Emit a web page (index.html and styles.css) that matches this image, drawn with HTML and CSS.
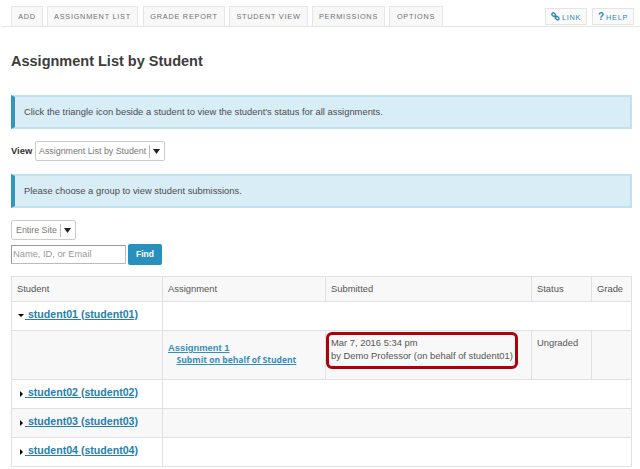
FILE: index.html
```html
<!DOCTYPE html>
<html lang="en">
<head>
<meta charset="utf-8">
<title>Assignment List by Student</title>
<link rel="stylesheet" href="styles.css">
</head>
<body>
<nav class="toolbar">
  <div class="tabs">
    <a class="tab add">ADD</a>
    <a class="tab list">ASSIGNMENT LIST</a>
    <a class="tab report">GRADE REPORT</a>
    <a class="tab view">STUDENT VIEW</a>
    <a class="tab perms">PERMISSIONS</a>
    <a class="tab options">OPTIONS</a>
  </div>
  <div class="tools">
    <a class="tool link"><svg class="chain" viewBox="0 0 9 9"><g fill="none" stroke="currentColor" stroke-width="1.3"><rect x="-2" y="-1.4" width="4" height="2.8" rx="1.4" transform="translate(2.7 2.7) rotate(45)"/><rect x="-2" y="-1.4" width="4" height="2.8" rx="1.4" transform="translate(6.2 6.2) rotate(45)"/><path d="M3.5 3.5L5.5 5.5"/></g></svg><span>LINK</span></a>
    <a class="tool help"><b>?</b><span>HELP</span></a>
  </div>
</nav>
<main>
  <h1><span>Assignment List by Student</span></h1>
  <p class="info first"><span>Click the triangle icon beside a student to view the student's status for all assignments.</span></p>
  <div class="chooser">
    <b>View</b>
    <div class="select wide"><span>Assignment List by Student</span><i></i><svg viewBox="0 0 7 5"><path d="M0 0H7L3.5 5Z"/></svg></div>
  </div>
  <p class="info second"><span>Please choose a group to view student submissions.</span></p>
  <div class="select site"><span>Entire Site</span><i></i><svg viewBox="0 0 7 5"><path d="M0 0H7L3.5 5Z"/></svg></div>
  <div class="search">
    <div class="field">Name, ID, or Email</div>
    <div class="find">Find</div>
  </div>
  <div class="table">
    <div class="row head"><div>Student</div><div>Assignment</div><div>Submitted</div><div>Status</div><div>Grade</div></div>
    <div class="row student"><div><svg class="open" viewBox="0 0 6 3"><path d="M0 0H6L3 3Z"/></svg><a>&nbsp;student01 (student01)</a></div><div></div></div>
    <div class="row detail">
      <div></div>
      <div><a class="assignment">Assignment 1</a><a class="submit">Submit on behalf of Student</a></div>
      <div class="submitted">Mar 7, 2016 5:34 pm<br><span>by Demo Professor (on behalf of student01)</span><div class="highlight"></div></div>
      <div>Ungraded</div>
      <div></div>
    </div>
    <div class="row student"><div><svg class="closed" viewBox="0 0 3 6"><path d="M0 0V6L3 3Z"/></svg><a>&nbsp;student02 (student02)</a></div><div></div></div>
    <div class="row student shade"><div><svg class="closed" viewBox="0 0 3 6"><path d="M0 0V6L3 3Z"/></svg><a>&nbsp;student03 (student03)</a></div><div></div></div>
    <div class="row student"><div><svg class="closed" viewBox="0 0 3 6"><path d="M0 0V6L3 3Z"/></svg><a>&nbsp;student04 (student04)</a></div><div></div></div>
  </div>
</main>
</body>
</html>
```
FILE: styles.css
```css
* { box-sizing: border-box; }
body { margin: 0; background: #fff; color: #555; font: 9.38px/13px "Liberation Sans", Arial, sans-serif; width: 640px; height: 469px; overflow: hidden; }
.toolbar { display: flex; justify-content: space-between; height: 27px; margin-left: 2px; padding: 6px 6px 0 9px; border-bottom: 1px solid #e4e4e4; }
.tabs { display: flex; gap: 4px; }
.tab { height: 20px; border: 1px solid #e6e6e6; border-bottom: 0; background: #f8f8f8; color: #707070; font-size: 7.3px; line-height: 19px; letter-spacing: .76px; text-align: center; white-space: nowrap; }
.add { width: 32px; }
.list { width: 91px; }
.report { width: 82px; margin-left: 1px; }
.view { width: 79px; }
.perms { width: 73px; }
.options { width: 54px; }
.tools { display: flex; gap: 5px; padding-top: 2px; }
.tool { display: flex; align-items: center; justify-content: center; height: 17px; border: 1px solid #e4e4e4; background: #fafafa; color: #2d87b5; font-size: 7.4px; line-height: 15px; letter-spacing: .65px; gap: 2px; }
.tool span { padding-top: 1px; }
.link { width: 42px; }
.help { width: 42px; }
.help b { font-size: 10px; letter-spacing: 0; }
.chain { width: 9px; height: 9px; flex: none; }
main { padding-left: 11px; }
h1 { margin: 25px 0 0; font-size: 14.5px; line-height: 18px; color: #3c3c3c; }
.info { width: 621px; height: 34px; margin: 0; padding-left: 9px; border: 2px solid #bfe2f1; border-left: 4px solid #3297bf; background: #d9edf7; color: #4c4c4c; line-height: 31px; }
.first { margin-top: 25px; }
.chooser { display: flex; align-items: center; height: 20px; margin-top: 12px; color: #333; }
.chooser b { width: 24px; }
.select { display: flex; align-items: center; height: 20px; border: 1px solid #ccc; border-radius: 2px; background: #fff; color: #777; padding-left: 4px; font-size: 8.85px; white-space: nowrap; }
.select i { width: 1px; height: 13px; background: #bbb; margin-left: auto; }
.select svg { flex: none; width: 7px; height: 5px; margin: 0 4px 0 3px; fill: #222; }
.wide { width: 130px; padding-left: 3px; }
.second { margin-top: 13px; }
.site { width: 65px; margin-top: 12px; }
.search { display: flex; gap: 2px; margin-top: 4px; }
.field { width: 115px; height: 19px; margin-top: 1px; border: 1px solid #bbb; border-top-color: #999; border-left-color: #999; color: #999; font-size: 9.3px; line-height: 17px; padding-left: 1px; }
.find { width: 34px; height: 21px; border-radius: 2px; background: #2890bf; color: #fff; font-weight: bold; font-size: 8.5px; line-height: 21px; text-align: center; }
.table { width: 621px; margin-top: 11px; border: 1px solid #e1e1e1; border-bottom: 0; }
.row { display: grid; grid-template-columns: 150px 163px 206px 60px 40px; border-bottom: 1px solid #e1e1e1; }
.row > div { padding-left: 5px; border-left: 1px solid #e1e1e1; white-space: nowrap; }
.row > div:first-child { border-left: 0; }
.head { height: 25px; background: #f8f8f8; line-height: 24px; }
.student { height: 29px; grid-template-columns: 150px 469px; }
.student > div { display: flex; align-items: center; padding-bottom: 5px; }
.student a { font-size: 10.6px; line-height: 14px; }
.table a { font-weight: bold; color: #257fae; text-decoration: underline; }
.open { width: 6px; height: 3px; margin: 3px 1px 0 1px; }
.closed { width: 3px; height: 6px; margin: 4px 2px 0 3px; }
.detail { height: 49px; background: #f8f8f8; }
.detail > div { padding-top: 6px; }
.detail a { display: block; }
.table .assignment { margin-top: 4px; color: #358fba; font-size: 9.4px; }
.table .submit { margin-left: 8.5px; color: #358fba; font: bold 8.55px/13px "Open Sans", sans-serif; }
.submitted { position: relative; }
.highlight { position: absolute; left: 0; top: 1px; width: 192px; height: 37px; border: 3px solid #b00008; border-radius: 6px; }
.shade { background: #f8f8f8; }
```
